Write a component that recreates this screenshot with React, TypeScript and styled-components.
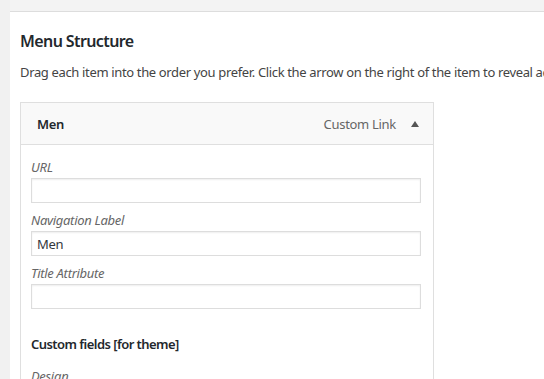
import styled, { createGlobalStyle } from "styled-components";

const GlobalStyle = createGlobalStyle`
  html, body {
    margin: 0;
    padding: 0;
    background: #f1f1f1;
    overflow: hidden;
  }
  body {
    font-family: "Noto Sans", "Open Sans", sans-serif;
    color: #444;
    letter-spacing: -0.3px;
  }
`;

const Page = styled.div`
  display: flex;
  height: 379px;
  padding-left: 10px;
  overflow: hidden;
`;

const Main = styled.div`
  flex: 1;
  display: flex;
  flex-direction: column;
`;

const TopBar = styled.div`
  height: 11px;
  background: #f3f3f3;
  border-bottom: 1px solid #dddddd;
`;

const Panel = styled.div`
  flex: 1;
  background: #ffffff;
  padding: 18px 0 0 10px;
  overflow: hidden;
`;

const Heading = styled.h3`
  margin: 0;
  font-size: 16px;
  font-weight: 600;
  line-height: 22px;
  letter-spacing: -0.6px;
  color: #23282d;
`;

const Description = styled.p`
  margin: 10px 0 0;
  font-size: 13px;
  line-height: 20px;
  letter-spacing: -0.35px;
  color: #444;
  white-space: nowrap;
`;

const Card = styled.div`
  width: 414px;
  box-sizing: border-box;
  margin-top: 20px;
  border: 1px solid #dfdfdf;
  background: #fff;
`;

const CardHeader = styled.div`
  height: 41px;
  display: flex;
  align-items: center;
  padding: 0 14px 0 16px;
  background: #f9f9f9;
  border-bottom: 1px solid #dfdfdf;
`;

const ItemTitle = styled.span`
  flex: 1;
  font-size: 13px;
  font-weight: 600;
  letter-spacing: -0.4px;
  color: #23282d;
`;

const ItemType = styled.span`
  font-size: 13px;
  color: #666;
  margin-right: 15px;
`;

const Arrow = styled.span`
  width: 0;
  height: 0;
  border-left: 4px solid transparent;
  border-right: 4px solid transparent;
  border-bottom: 6px solid #555;
`;

const CardBody = styled.div`
  padding: 13px 11px 10px 10px;
`;

const Field = styled.div`
  display: flex;
  flex-direction: column;
  margin-bottom: 8px;
`;

const FieldLabel = styled.label`
  font-size: 13px;
  font-style: italic;
  line-height: 18px;
  color: #666;
  margin-bottom: 2px;
`;

const TextInput = styled.input`
  box-sizing: border-box;
  width: 390px;
  height: 25px;
  margin: 0;
  padding: 2px 5px;
  border: 1px solid #ddd;
  box-shadow: inset 0 1px 2px rgba(0, 0, 0, 0.07);
  font-family: inherit;
  font-size: 13px;
  letter-spacing: -0.3px;
  color: #32373c;
  background: #fff;
  outline: none;
`;

const SectionTitle = styled.div`
  margin-top: 26px;
  margin-bottom: 14px;
  font-size: 13px;
  font-weight: 600;
  letter-spacing: -0.55px;
  color: #23282d;
`;

const fields = [
  { label: "URL", value: "" },
  { label: "Navigation Label", value: "Men" },
  { label: "Title Attribute", value: "" },
];

export default function App() {
  return (
    <>
      <GlobalStyle />
      <Page>
        <Main>
          <TopBar />
          <Panel>
            <Heading>Menu Structure</Heading>
            <Description>
              Drag each item into the order you prefer. Click the arrow on the right of the item to reveal additional configuration options.
            </Description>
            <Card>
              <CardHeader>
                <ItemTitle>Men</ItemTitle>
                <ItemType>Custom Link</ItemType>
                <Arrow />
              </CardHeader>
              <CardBody>
                {fields.map((f) => (
                  <Field key={f.label}>
                    <FieldLabel>{f.label}</FieldLabel>
                    <TextInput defaultValue={f.value} />
                  </Field>
                ))}
                <SectionTitle>Custom fields [for theme]</SectionTitle>
                <Field>
                  <FieldLabel>Design</FieldLabel>
                  <TextInput />
                </Field>
              </CardBody>
            </Card>
          </Panel>
        </Main>
      </Page>
    </>
  );
}
